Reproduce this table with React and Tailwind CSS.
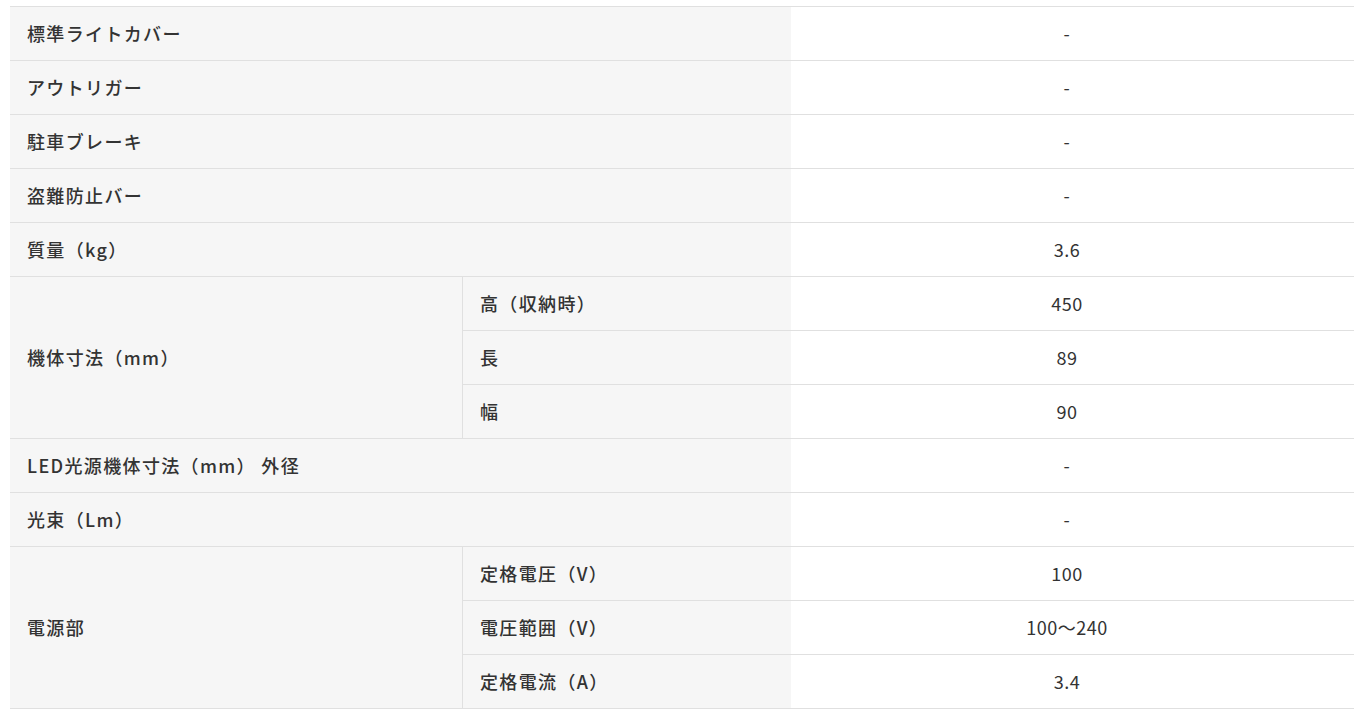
import React from "react";

const font = { fontFamily: '"Noto Sans CJK JP", "Noto Sans", sans-serif' };

const L = ({ children, span = false }) => (
  <div
    className={`bg-[#f6f6f6] border-b border-[#e0e0e0] flex items-center pl-[17px] text-[18px] tracking-[0.075em] font-medium text-[#333] ${span ? "col-span-2" : ""}`}
  >
    {children}
  </div>
);

const V = ({ children }) => (
  <div className="bg-white border-b border-[#e0e0e0] flex items-center justify-center pr-[11px] text-[18px] tracking-[0.03em] text-[#333]">
    {children}
  </div>
);

export default function App() {
  return (
    <div className="bg-white w-[1354px] h-[716px] overflow-hidden" style={font}>
      <div className="mt-[6px] ml-[10px] border-t border-[#e0e0e0] grid grid-cols-[453px_328px_1fr] auto-rows-[54px]">
        <L span>標準ライトカバー</L>
        <V>-</V>
        <L span>アウトリガー</L>
        <V>-</V>
        <L span>駐車ブレーキ</L>
        <V>-</V>
        <L span>盗難防止バー</L>
        <V>-</V>
        <L span>質量（kg）</L>
        <V>3.6</V>

        <div className="row-span-3 bg-[#f6f6f6] border-b border-r border-[#e0e0e0] flex items-center pl-[17px] text-[18px] tracking-[0.075em] font-medium text-[#333]">
          機体寸法（mm）
        </div>
        <L>高（収納時）</L>
        <V>450</V>
        <L>長</L>
        <V>89</V>
        <L>幅</L>
        <V>90</V>

        <L span>LED光源機体寸法（mm） 外径</L>
        <V>-</V>
        <L span>光束（Lm）</L>
        <V>-</V>

        <div className="row-span-3 bg-[#f6f6f6] border-b border-r border-[#e0e0e0] flex items-center pl-[17px] text-[18px] tracking-[0.075em] font-medium text-[#333]">
          電源部
        </div>
        <L>定格電圧（V）</L>
        <V>100</V>
        <L>電圧範囲（V）</L>
        <V>100〜240</V>
        <L>定格電流（A）</L>
        <V>3.4</V>
      </div>
    </div>
  );
}
